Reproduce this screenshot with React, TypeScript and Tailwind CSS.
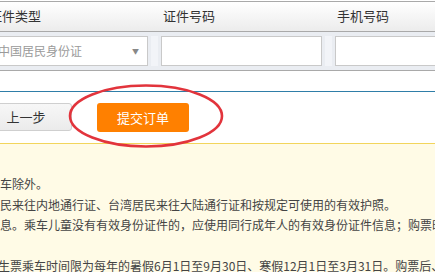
import * as React from 'react'

const columns = [
  { label: '证件类型', value: '中国居民身份证', select: true },
  { label: '证件号码', value: '' },
  { label: '手机号码', value: '' },
]

const notes = [
  { text: '车除外。', offset: 0 },
  { text: '民来往内地通行证、台湾居民来往大陆通行证和按规定可使用的有效护照。', offset: 0 },
  { text: '息。乘车儿童没有有效身份证件的，应使用同行成年人的有效身份证件信息；购票时，', offset: 0 },
  { text: '', offset: 0 },
  { text: '学生票乘车时间限为每年的暑假6月1日至9月30日、寒假12月1日至3月31日。购票后、', offset: -14 },
]

const App = () => {
  return (
    <div
      className="relative w-[435px] h-[272px] overflow-hidden bg-white text-[#333]"
      style={{ fontFamily: '"Noto Sans CJK SC", "Liberation Sans", sans-serif' }}
    >
      <div className="ml-[-13px] w-[540px]">
        {/* header row */}
        <div className="mt-px flex h-[31px] border-y border-[#a9a9a9] bg-gradient-to-b from-white to-[#ececec]">
          {columns.map((c) => (
            <div key={c.label} className="w-[174px] shrink-0 pl-[2px] pt-[3px] text-[13px] leading-[22px]">
              {c.label}
            </div>
          ))}
        </div>

        {/* input row */}
        <div className="flex h-[39px] border-b border-[#a9a9a9] bg-[#eaedf2] py-[4px]">
          {columns.map((c) => (
            <div key={c.label} className="flex w-[174px] shrink-0">
              <div className="flex h-[30px] w-[161px] items-center border border-[#c9c9c9] bg-white pl-[10px] pr-[8px] text-[12px] text-[#9a9a9a]">
                <span className="flex-1">{c.value}</span>
                {c.select && <span className="text-[7px] text-[#888]">▼</span>}
              </div>
              <div className="flex w-[13px] justify-center">
                <div className="w-[7px] bg-[#f2f4f8]" />
              </div>
            </div>
          ))}
        </div>
      </div>

      {/* divider */}
      <div className="mt-[20px] h-px bg-[#2f7ea8]" />

      {/* buttons */}
      <div className="ml-[-20px] mt-[11px] flex gap-[25px]">
        <button className="h-[28px] w-[92px] rounded-[3px] border border-[#cfcfcf] bg-gradient-to-b from-[#f7f7f7] to-[#ebebeb] text-[13px] text-[#333]">
          上一步
        </button>
        <button className="h-[29px] w-[92px] rounded-[3px] bg-[#ff8000] text-[13px] text-white">
          提交订单
        </button>
      </div>

      {/* notice box */}
      <div className="mt-[11px] h-[200px] border-t border-[#f2d55c] bg-[#fffbe6] pt-[30px] text-[12px] leading-[20.5px] text-[#444]">
        {notes.map((n, i) => (
          <div key={i} className="h-[20.5px] whitespace-nowrap" style={{ marginLeft: n.offset }}>
            {n.text}
          </div>
        ))}
      </div>

      {/* red annotation ellipse */}
      <svg className="pointer-events-none absolute left-0 top-0" width="435" height="272">
        <ellipse cx="146" cy="116" rx="76" ry="30.5" fill="none" stroke="#e2343c" strokeWidth="2.6" />
      </svg>
    </div>
  )
}

export default App
